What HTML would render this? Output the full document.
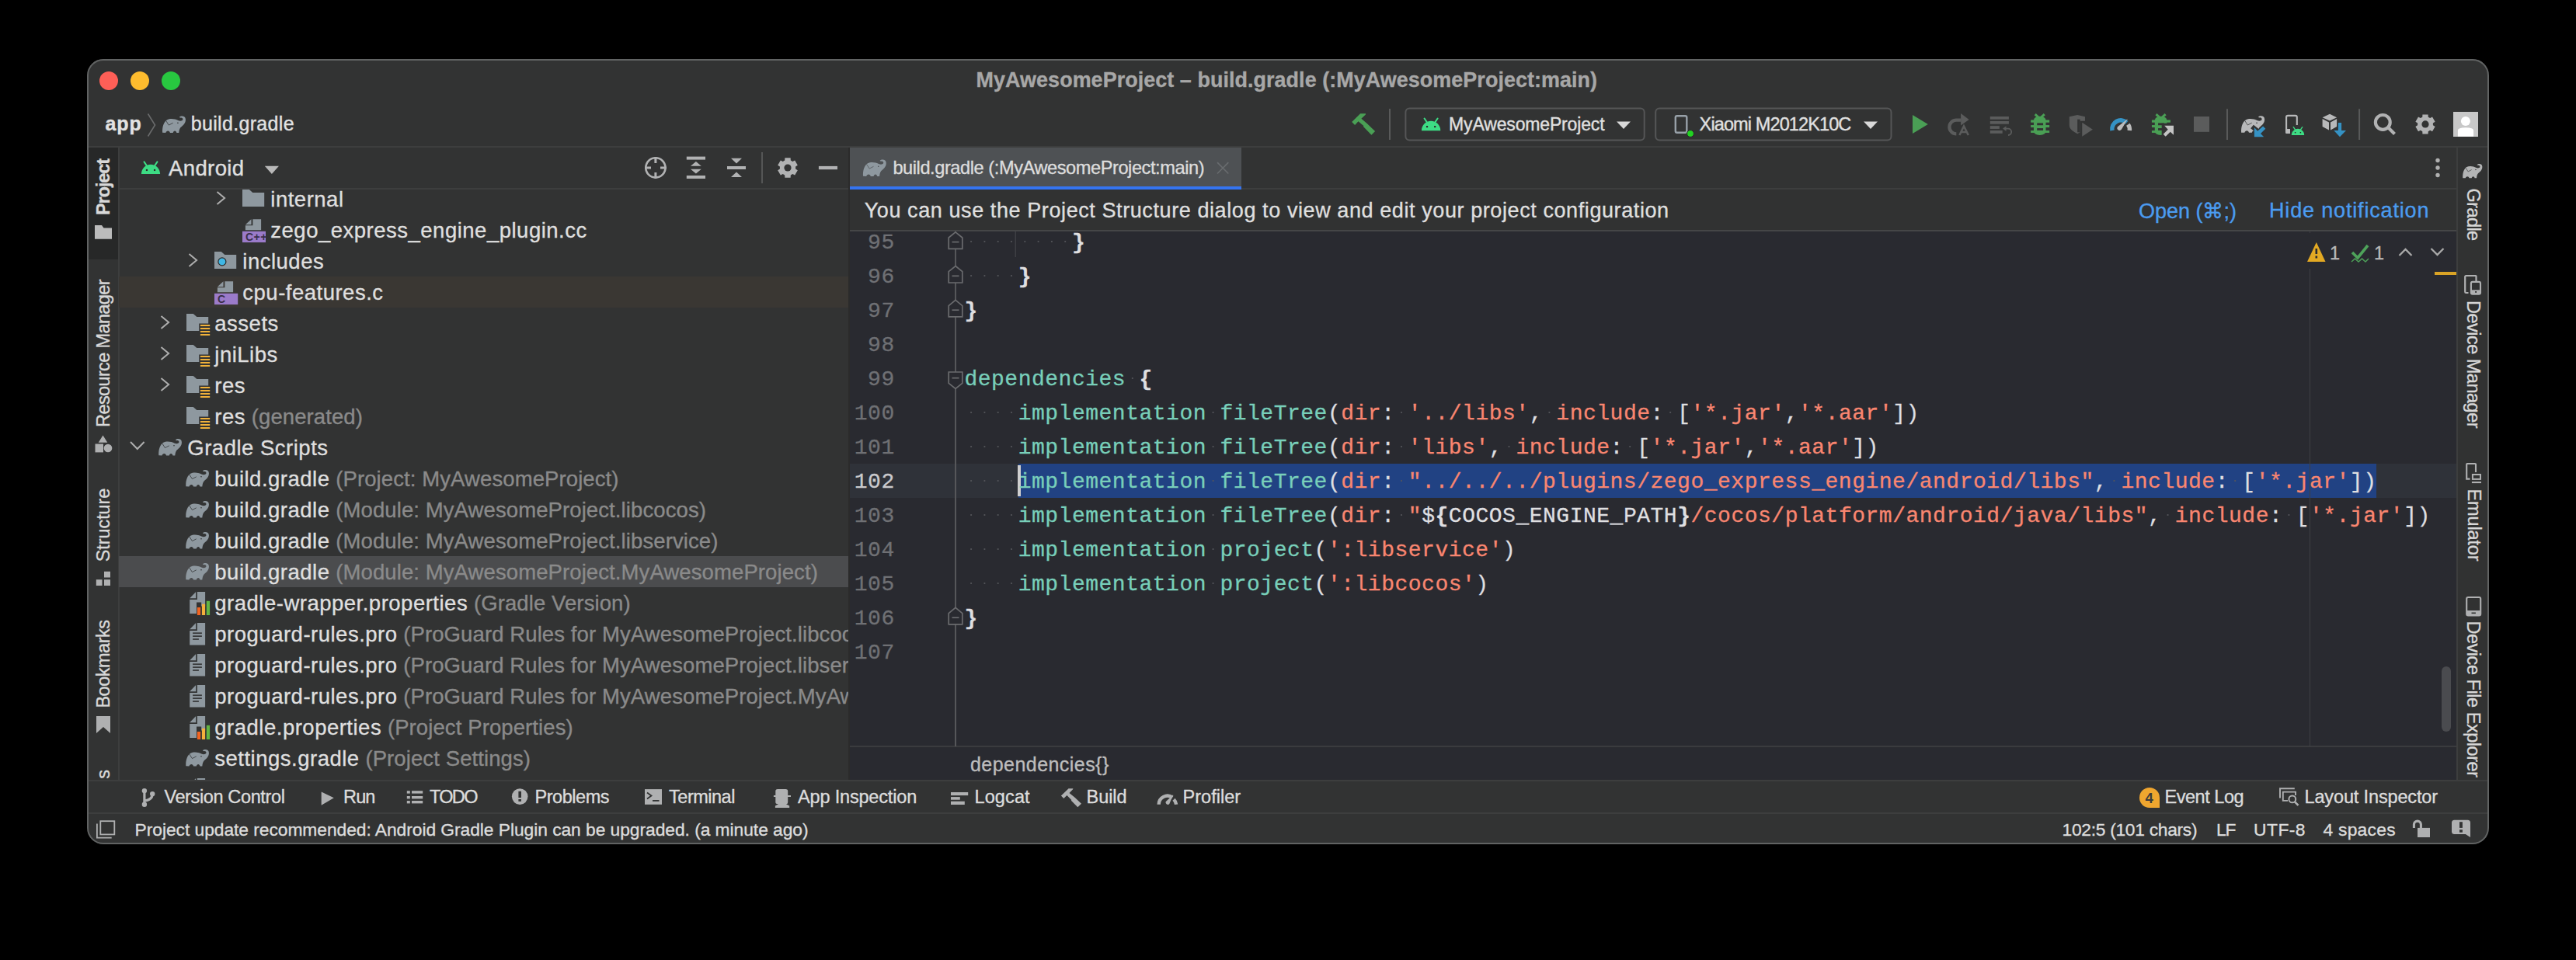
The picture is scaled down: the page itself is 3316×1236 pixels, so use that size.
<!DOCTYPE html>
<html><head><meta charset="utf-8"><style>
html,body{margin:0;padding:0;background:#000;width:3316px;height:1236px;overflow:hidden}
#win div,#win svg{position:absolute}
.t{font-family:"Liberation Sans",sans-serif;white-space:pre;line-height:normal;-webkit-text-stroke:0.35px currentColor}
.m{font-family:"Liberation Mono",monospace;white-space:pre;line-height:normal;-webkit-text-stroke:0.3px currentColor}
</style></head><body>
<div id="win" style="position:absolute;left:0;top:0;width:3316px;height:1236px;clip-path:inset(76px 113px 149px 113px round 20px)">
<div style="left:113px;top:76px;width:3090px;height:1011px;background:#323333;"></div><div style="left:113px;top:188px;width:3090px;height:2px;background:#3d3e3e;"></div><div style="left:113px;top:190px;width:39px;height:815px;background:#323333;"></div><div style="left:113px;top:190px;width:39px;height:144px;background:#272828;"></div><div style="left:152px;top:190px;width:1.5px;height:815px;background:#3d3e3e;"></div><div style="left:153px;top:242px;width:939px;height:2px;background:#3d3e3e;"></div><div style="left:1092px;top:190px;width:2px;height:815px;background:#2b2b2b;"></div><div style="left:1094px;top:242px;width:2068px;height:2px;background:#3d3e3e;"></div><div style="left:1094px;top:190px;width:504px;height:50px;background:#4e5154;"></div><div style="left:1094px;top:240px;width:504px;height:4px;background:#3574f0;"></div><div style="left:1094px;top:244px;width:2068px;height:52px;background:#313232;"></div><div style="left:1094px;top:296px;width:2068px;height:2px;background:#454647;"></div><div style="left:1094px;top:298px;width:2068px;height:663px;background:#292a30;"></div><div style="left:1094px;top:960px;width:2068px;height:2px;background:#3a3b3e;"></div><div style="left:1094px;top:962px;width:2068px;height:43px;background:#292a30;"></div><div style="left:3162px;top:190px;width:2px;height:815px;background:#3d3e3e;"></div><div style="left:3164px;top:190px;width:39px;height:815px;background:#313232;"></div><div style="left:113px;top:1004px;width:3090px;height:2px;background:#3d3e3e;"></div><div style="left:113px;top:1046px;width:3090px;height:2px;background:#3d3e3e;"></div><div class="t" style="left:1256.60px;top:87.80px;font-size:26.9px;color:#a7a7a7;font-weight:700;letter-spacing:0.072px;">MyAwesomeProject – build.gradle (:MyAwesomeProject:main)</div><div class="t" style="left:135.50px;top:145.10px;font-size:25px;color:#e2e2e2;font-weight:700;letter-spacing:0.898px;">app</div><div class="t" style="left:245.70px;top:145.10px;font-size:25px;color:#e2e2e2;font-weight:400;letter-spacing:0.335px;">build.gradle</div><div class="t" style="left:1865.10px;top:147.00px;font-size:23px;color:#e0e0e0;font-weight:400;letter-spacing:-0.156px;">MyAwesomeProject</div><div class="t" style="left:2187.60px;top:147.00px;font-size:23.5px;color:#e0e0e0;font-weight:400;letter-spacing:-0.886px;">Xiaomi M2012K10C</div><div class="t" style="left:217.00px;top:201.00px;font-size:27.5px;color:#e0e0e0;font-weight:400;letter-spacing:0.396px;">Android</div><div class="t" style="left:1149.40px;top:203.10px;font-size:23.6px;color:#dcdcdc;font-weight:400;letter-spacing:-0.429px;">build.gradle (:MyAwesomeProject:main)</div><div class="t" style="left:1112.70px;top:256.00px;font-size:27px;color:#dfdfdf;font-weight:400;letter-spacing:0.588px;">You can use the Project Structure dialog to view and edit your project configuration</div><div class="t" style="left:2753.00px;top:256.00px;font-size:27px;color:#4b9cf0;font-weight:400;letter-spacing:-0.015px;">Open (⌘;)</div><div class="t" style="left:2921.00px;top:256.00px;font-size:27px;color:#4b9cf0;font-weight:400;letter-spacing:0.832px;">Hide notification</div><div style="left:0;top:0;width:3316px;height:1236px;clip-path:inset(244px 2224px 232px 153px)"><div class="t" style="left:348.3px;top:241.1px;font-size:27.5px;letter-spacing:0.5px;color:#dfdfdf">internal<span style="color:#8a8a8a;letter-spacing:0.10000000000000003px"></span></div><div class="t" style="left:348.3px;top:281.1px;font-size:27.5px;letter-spacing:0.5px;color:#dfdfdf">zego_express_engine_plugin.cc<span style="color:#8a8a8a;letter-spacing:0.10000000000000003px"></span></div><div class="t" style="left:312.3px;top:321.1px;font-size:27.5px;letter-spacing:0.5px;color:#dfdfdf">includes<span style="color:#8a8a8a;letter-spacing:0.10000000000000003px"></span></div><div style="left:153px;top:355.5px;width:939px;height:40px;background:#3a3733;"></div><div class="t" style="left:312.3px;top:361.1px;font-size:27.5px;letter-spacing:0.5px;color:#dfdfdf">cpu-features.c<span style="color:#8a8a8a;letter-spacing:0.10000000000000003px"></span></div><div class="t" style="left:276.3px;top:401.1px;font-size:27.5px;letter-spacing:0.5px;color:#dfdfdf">assets<span style="color:#8a8a8a;letter-spacing:0.10000000000000003px"></span></div><div class="t" style="left:276.3px;top:441.1px;font-size:27.5px;letter-spacing:0.5px;color:#dfdfdf">jniLibs<span style="color:#8a8a8a;letter-spacing:0.10000000000000003px"></span></div><div class="t" style="left:276.3px;top:481.1px;font-size:27.5px;letter-spacing:0.5px;color:#dfdfdf">res<span style="color:#8a8a8a;letter-spacing:0.10000000000000003px"></span></div><div class="t" style="left:276.3px;top:521.1px;font-size:27.5px;letter-spacing:0.5px;color:#dfdfdf">res<span style="color:#8a8a8a;letter-spacing:0.10000000000000003px"> (generated)</span></div><div class="t" style="left:241.3px;top:561.1px;font-size:27.5px;letter-spacing:0.5px;color:#dfdfdf">Gradle Scripts<span style="color:#8a8a8a;letter-spacing:0.10000000000000003px"></span></div><div class="t" style="left:276.3px;top:601.1px;font-size:27.5px;letter-spacing:0.5px;color:#dfdfdf">build.gradle<span style="color:#8a8a8a;letter-spacing:0.10000000000000003px"> (Project: MyAwesomeProject)</span></div><div class="t" style="left:276.3px;top:641.1px;font-size:27.5px;letter-spacing:0.5px;color:#dfdfdf">build.gradle<span style="color:#8a8a8a;letter-spacing:0.10000000000000003px"> (Module: MyAwesomeProject.libcocos)</span></div><div class="t" style="left:276.3px;top:681.1px;font-size:27.5px;letter-spacing:0.5px;color:#dfdfdf">build.gradle<span style="color:#8a8a8a;letter-spacing:0.10000000000000003px"> (Module: MyAwesomeProject.libservice)</span></div><div style="left:153px;top:715.5px;width:939px;height:40px;background:#4b4c4e;"></div><div class="t" style="left:276.3px;top:721.1px;font-size:27.5px;letter-spacing:0.5px;color:#dfdfdf">build.gradle<span style="color:#8a8a8a;letter-spacing:0.10000000000000003px"> (Module: MyAwesomeProject.MyAwesomeProject)</span></div><div class="t" style="left:276.3px;top:761.1px;font-size:27.5px;letter-spacing:0.5px;color:#dfdfdf">gradle-wrapper.properties<span style="color:#8a8a8a;letter-spacing:0.10000000000000003px"> (Gradle Version)</span></div><div class="t" style="left:276.3px;top:801.1px;font-size:27.5px;letter-spacing:0.5px;color:#dfdfdf">proguard-rules.pro<span style="color:#8a8a8a;letter-spacing:0.10000000000000003px"> (ProGuard Rules for MyAwesomeProject.libcocos)</span></div><div class="t" style="left:276.3px;top:841.1px;font-size:27.5px;letter-spacing:0.5px;color:#dfdfdf">proguard-rules.pro<span style="color:#8a8a8a;letter-spacing:0.10000000000000003px"> (ProGuard Rules for MyAwesomeProject.libservice)</span></div><div class="t" style="left:276.3px;top:881.1px;font-size:27.5px;letter-spacing:0.5px;color:#dfdfdf">proguard-rules.pro<span style="color:#8a8a8a;letter-spacing:0.10000000000000003px"> (ProGuard Rules for MyAwesomeProject.MyAwesomeProject)</span></div><div class="t" style="left:276.3px;top:921.1px;font-size:27.5px;letter-spacing:0.5px;color:#dfdfdf">gradle.properties<span style="color:#8a8a8a;letter-spacing:0.10000000000000003px"> (Project Properties)</span></div><div class="t" style="left:276.3px;top:961.1px;font-size:27.5px;letter-spacing:0.5px;color:#dfdfdf">settings.gradle<span style="color:#8a8a8a;letter-spacing:0.10000000000000003px"> (Project Settings)</span></div><div class="t" style="left:276.3px;top:1001.1px;font-size:27.5px;letter-spacing:0.5px;color:#dfdfdf">local.properties<span style="color:#8a8a8a;letter-spacing:0.10000000000000003px"> (SDK Location)</span></div></div><div style="left:1094px;top:597px;width:2068px;height:44px;background:#2f3239;"></div><div style="left:1310.6px;top:597px;width:1748.1px;height:44px;background:#214283;"></div><div style="left:1309.5px;top:599px;width:4px;height:40px;background:#cfcfcf;"></div><div style="left:2972.5px;top:298px;width:1.5px;height:663px;background:#3e3f44;"></div><div style="left:1229px;top:298px;width:2px;height:663px;background:#56575a;"></div><div class="m" style="left:1117.08px;top:297.30px;font-size:28px;letter-spacing:0.51px;color:#6f7074">95</div><div class="m" style="left:1241.40px;top:297.30px;font-size:28px;letter-spacing:0.51px">        <span style="color:#dfdfe0;font-weight:700">}</span></div><div class="m" style="left:1117.08px;top:341.30px;font-size:28px;letter-spacing:0.51px;color:#6f7074">96</div><div class="m" style="left:1241.40px;top:341.30px;font-size:28px;letter-spacing:0.51px">    <span style="color:#dfdfe0;font-weight:700">}</span></div><div class="m" style="left:1117.08px;top:385.30px;font-size:28px;letter-spacing:0.51px;color:#6f7074">97</div><div class="m" style="left:1241.40px;top:385.30px;font-size:28px;letter-spacing:0.51px"><span style="color:#dfdfe0;font-weight:700">}</span></div><div class="m" style="left:1117.08px;top:429.30px;font-size:28px;letter-spacing:0.51px;color:#6f7074">98</div><div class="m" style="left:1117.08px;top:473.30px;font-size:28px;letter-spacing:0.51px;color:#6f7074">99</div><div class="m" style="left:1241.40px;top:473.30px;font-size:28px;letter-spacing:0.51px"><span style="color:#78cfba">dependencies</span> <span style="color:#dfdfe0;font-weight:700">{</span></div><div class="m" style="left:1099.77px;top:517.30px;font-size:28px;letter-spacing:0.51px;color:#6f7074">100</div><div class="m" style="left:1241.40px;top:517.30px;font-size:28px;letter-spacing:0.51px">    <span style="color:#78cfba">implementation</span> <span style="color:#78cfba">fileTree</span><span style="color:#dfdfe0">(</span><span style="color:#f98670">dir</span><span style="color:#dfdfe0">:</span> <span style="color:#f98670">&#x27;../libs&#x27;</span><span style="color:#dfdfe0">,</span> <span style="color:#f98670">include</span><span style="color:#dfdfe0">:</span> <span style="color:#dfdfe0">[</span><span style="color:#f98670">&#x27;*.jar&#x27;</span><span style="color:#dfdfe0">,</span><span style="color:#f98670">&#x27;*.aar&#x27;</span><span style="color:#dfdfe0">])</span></div><div class="m" style="left:1099.77px;top:561.30px;font-size:28px;letter-spacing:0.51px;color:#6f7074">101</div><div class="m" style="left:1241.40px;top:561.30px;font-size:28px;letter-spacing:0.51px">    <span style="color:#78cfba">implementation</span> <span style="color:#78cfba">fileTree</span><span style="color:#dfdfe0">(</span><span style="color:#f98670">dir</span><span style="color:#dfdfe0">:</span> <span style="color:#f98670">&#x27;libs&#x27;</span><span style="color:#dfdfe0">,</span> <span style="color:#f98670">include</span><span style="color:#dfdfe0">:</span> <span style="color:#dfdfe0">[</span><span style="color:#f98670">&#x27;*.jar&#x27;</span><span style="color:#dfdfe0">,</span><span style="color:#f98670">&#x27;*.aar&#x27;</span><span style="color:#dfdfe0">])</span></div><div class="m" style="left:1099.77px;top:605.30px;font-size:28px;letter-spacing:0.51px;color:#c9c9cc">102</div><div class="m" style="left:1241.40px;top:605.30px;font-size:28px;letter-spacing:0.51px">    <span style="color:#78cfba">implementation</span> <span style="color:#78cfba">fileTree</span><span style="color:#dfdfe0">(</span><span style="color:#f98670">dir</span><span style="color:#dfdfe0">:</span> <span style="color:#f98670">&quot;../../../plugins/zego_express_engine/android/libs&quot;</span><span style="color:#dfdfe0">,</span> <span style="color:#f98670">include</span><span style="color:#dfdfe0">:</span> <span style="color:#dfdfe0">[</span><span style="color:#f98670">&#x27;*.jar&#x27;</span><span style="color:#dfdfe0">])</span></div><div class="m" style="left:1099.77px;top:649.30px;font-size:28px;letter-spacing:0.51px;color:#6f7074">103</div><div class="m" style="left:1241.40px;top:649.30px;font-size:28px;letter-spacing:0.51px">    <span style="color:#78cfba">implementation</span> <span style="color:#78cfba">fileTree</span><span style="color:#dfdfe0">(</span><span style="color:#f98670">dir</span><span style="color:#dfdfe0">:</span> <span style="color:#f98670">&quot;</span><span style="color:#dfdfe0">$</span><span style="color:#dfdfe0;font-weight:700">{</span><span style="color:#dfdfe0">COCOS_ENGINE_PATH</span><span style="color:#dfdfe0;font-weight:700">}</span><span style="color:#f98670">/cocos/platform/android/java/libs&quot;</span><span style="color:#dfdfe0">,</span> <span style="color:#f98670">include</span><span style="color:#dfdfe0">:</span> <span style="color:#dfdfe0">[</span><span style="color:#f98670">&#x27;*.jar&#x27;</span><span style="color:#dfdfe0">])</span></div><div class="m" style="left:1099.77px;top:693.30px;font-size:28px;letter-spacing:0.51px;color:#6f7074">104</div><div class="m" style="left:1241.40px;top:693.30px;font-size:28px;letter-spacing:0.51px">    <span style="color:#78cfba">implementation</span> <span style="color:#78cfba">project</span><span style="color:#dfdfe0">(</span><span style="color:#f98670">&#x27;:libservice&#x27;</span><span style="color:#dfdfe0">)</span></div><div class="m" style="left:1099.77px;top:737.30px;font-size:28px;letter-spacing:0.51px;color:#6f7074">105</div><div class="m" style="left:1241.40px;top:737.30px;font-size:28px;letter-spacing:0.51px">    <span style="color:#78cfba">implementation</span> <span style="color:#78cfba">project</span><span style="color:#dfdfe0">(</span><span style="color:#f98670">&#x27;:libcocos&#x27;</span><span style="color:#dfdfe0">)</span></div><div class="m" style="left:1099.77px;top:781.30px;font-size:28px;letter-spacing:0.51px;color:#6f7074">106</div><div class="m" style="left:1241.40px;top:781.30px;font-size:28px;letter-spacing:0.51px"><span style="color:#dfdfe0;font-weight:700">}</span></div><div class="m" style="left:1099.77px;top:825.30px;font-size:28px;letter-spacing:0.51px;color:#6f7074">107</div><div style="left:2960px;top:300px;width:30px;height:46px;background:#292a30;"></div><div class="t" style="left:2999.00px;top:312.50px;font-size:23.5px;color:#b9b9b9;font-weight:400;letter-spacing:0px;">1</div><div class="t" style="left:3056.00px;top:312.50px;font-size:23.5px;color:#b9b9b9;font-weight:400;letter-spacing:0px;">1</div><div class="t" style="left:1249.00px;top:970.00px;font-size:25px;color:#bdbdbd;font-weight:400;letter-spacing:0.451px;">dependencies{}</div><div class="t" style="left:211.40px;top:1013.20px;font-size:23.5px;color:#dcdcdc;font-weight:400;letter-spacing:-0.368px;">Version Control</div><div class="t" style="left:442.10px;top:1013.20px;font-size:23.5px;color:#dcdcdc;font-weight:400;letter-spacing:-0.905px;">Run</div><div class="t" style="left:553.00px;top:1013.20px;font-size:23.5px;color:#dcdcdc;font-weight:400;letter-spacing:-1.685px;">TODO</div><div class="t" style="left:688.50px;top:1013.20px;font-size:23.5px;color:#dcdcdc;font-weight:400;letter-spacing:-0.45px;">Problems</div><div class="t" style="left:861.10px;top:1013.20px;font-size:23.5px;color:#dcdcdc;font-weight:400;letter-spacing:-0.5px;">Terminal</div><div class="t" style="left:1027.00px;top:1013.20px;font-size:23.5px;color:#dcdcdc;font-weight:400;letter-spacing:-0.175px;">App Inspection</div><div class="t" style="left:1254.50px;top:1013.20px;font-size:23.5px;color:#dcdcdc;font-weight:400;letter-spacing:0.11px;">Logcat</div><div class="t" style="left:1398.50px;top:1013.20px;font-size:23.5px;color:#dcdcdc;font-weight:400;letter-spacing:-0.038px;">Build</div><div class="t" style="left:1522.50px;top:1013.20px;font-size:23.5px;color:#dcdcdc;font-weight:400;letter-spacing:0.025px;">Profiler</div><div class="t" style="left:2786.50px;top:1013.20px;font-size:23.5px;color:#dcdcdc;font-weight:400;letter-spacing:-0.466px;">Event Log</div><div class="t" style="left:2966.50px;top:1013.20px;font-size:23.5px;color:#dcdcdc;font-weight:400;letter-spacing:-0.142px;">Layout Inspector</div><div class="t" style="left:173.60px;top:1054.70px;font-size:22.8px;color:#dcdcdc;font-weight:400;letter-spacing:-0.046px;">Project update recommended: Android Gradle Plugin can be upgraded. (a minute ago)</div><div class="t" style="left:2654.50px;top:1054.70px;font-size:22.8px;color:#dcdcdc;font-weight:400;letter-spacing:-0.29px;">102:5 (101 chars)</div><div class="t" style="left:2853.10px;top:1054.70px;font-size:22.8px;color:#dcdcdc;font-weight:400;letter-spacing:-1.157px;">LF</div><div class="t" style="left:2901.10px;top:1054.70px;font-size:22.8px;color:#dcdcdc;font-weight:400;letter-spacing:0.465px;">UTF-8</div><div class="t" style="left:2990.50px;top:1054.70px;font-size:22.8px;color:#dcdcdc;font-weight:400;letter-spacing:0.257px;">4 spaces</div><div class="t" style="left:95.6px;top:227.2px;width:74.9px;height:28px;line-height:28px;text-align:center;font-size:23.5px;letter-spacing:-1.109px;color:#d8d8d8;font-weight:700;transform:rotate(-90deg)">Project</div><div class="t" style="left:36.8px;top:440.5px;width:192.3px;height:28px;line-height:28px;text-align:center;font-size:23.5px;letter-spacing:-0.63px;color:#d8d8d8;font-weight:400;transform:rotate(-90deg)">Resource Manager</div><div class="t" style="left:84.8px;top:662.2px;width:96.5px;height:28px;line-height:28px;text-align:center;font-size:23.5px;letter-spacing:-0.091px;color:#d8d8d8;font-weight:400;transform:rotate(-90deg)">Structure</div><div class="t" style="left:75.2px;top:840.8px;width:115.5px;height:28px;line-height:28px;text-align:center;font-size:23.5px;letter-spacing:-0.491px;color:#d8d8d8;font-weight:400;transform:rotate(-90deg)">Bookmarks</div><div style="left:0;top:0;width:3316px;height:1236px;clip-path:inset(960px 3160px 233px 113px)"><div class="t" style="left:50.2px;top:1058.2px;width:165.5px;height:28px;line-height:28px;text-align:center;font-size:23.5px;letter-spacing:1.567px;color:#d8d8d8;font-weight:400;transform:rotate(-90deg)">Build Variants</div></div><div class="t" style="left:3149.2px;top:261.7px;width:69.6px;height:28px;line-height:28px;text-align:center;font-size:23.5px;letter-spacing:-0.566px;color:#d8d8d8;transform:rotate(90deg)">Gradle</div><div class="t" style="left:3100.8px;top:455.1px;width:166.5px;height:28px;line-height:28px;text-align:center;font-size:23.5px;letter-spacing:-0.5px;color:#d8d8d8;transform:rotate(90deg)">Device Manager</div><div class="t" style="left:3136.5px;top:661.5px;width:95.0px;height:28px;line-height:28px;text-align:center;font-size:23.5px;letter-spacing:-0.133px;color:#d8d8d8;transform:rotate(90deg)">Emulator</div><div class="t" style="left:3082.2px;top:886.2px;width:203.5px;height:28px;line-height:28px;text-align:center;font-size:23.5px;letter-spacing:-0.455px;color:#d8d8d8;transform:rotate(90deg)">Device File Explorer</div><div style="left:0;top:0;width:3316px;height:1236px;"><svg style="left:0;top:0" width="3316" height="1236" viewBox="0 0 3316 1236"><circle cx="140" cy="104" r="12" fill="#ff5f57"/><circle cx="180" cy="104" r="12" fill="#febc2e"/><circle cx="220" cy="104" r="12" fill="#28c840"/><path d="M190.5,146.5 L199.5,161 L190.5,175.5" fill="none" stroke="#6a6b6c" stroke-width="1.6"/><g transform="translate(208.8,149) scale(0.03146,0.03099) translate(-130,-120)"><path fill="#8e989f" d="M140 825 C125 600 185 385 330 290 C450 225 650 240 800 325 C870 355 950 340 975 285 C990 225 930 180 870 205 L830 180 C900 105 1085 115 1088 270 C1092 420 1000 505 885 600 C845 640 822 720 812 828 L720 828 C705 720 590 720 572 828 L452 828 C432 720 300 720 272 828 Z"/><circle cx="770" cy="420" r="26" fill="#2f3031"/><path d="M285 330 L400 510 L570 420" fill="none" stroke="#2f3031" stroke-width="24"/></g></svg></div><div style="left:0;top:0;width:3316px;height:1236px;clip-path:inset(244px 2224px 232px 153px)"><svg style="left:0;top:0" width="3316" height="1236" viewBox="0 0 3316 1236"><path d="M279.5,247.1 L289.1,255.0 L279.5,262.9" fill="none" stroke="#aeaeae" stroke-width="2"/><path fill="#8e989f" d="M312,244.0 H320.8 L325.3,248.0 H340.2 V266.0 H312 Z"/><path fill="#8e989f" d="M315.9,289.3 L323.5,282.2 V289.3 Z"/><path fill="#8e989f" d="M325.4,282.2 H336.1 V296.3 H315.9 V290.3 H325.4 Z"/><rect x="312" y="297.8" width="30" height="14.3" fill="#9b7bca"/><text x="316" y="309.8" font-family="Liberation Sans" font-size="14" font-weight="700" fill="#3a2f4a" letter-spacing="0.5">C++</text><path d="M243.5,327.1 L253.1,335.0 L243.5,342.90000000000003" fill="none" stroke="#aeaeae" stroke-width="2"/><path fill="#8e989f" d="M276,324.0 H284.8 L289.3,328.0 H304.2 V346.0 H276 Z"/><circle cx="285.9" cy="336.9" r="5" fill="#3fb7e5" stroke="#2a2b2b" stroke-width="1.2"/><path fill="#8e989f" d="M279.9,369.3 L287.5,362.2 V369.3 Z"/><path fill="#8e989f" d="M289.4,362.2 H300.1 V376.3 H279.9 V370.3 H289.4 Z"/><rect x="276" y="377.8" width="30.2" height="14.3" fill="#9b7bca"/><text x="280" y="389.8" font-family="Liberation Sans" font-size="14" font-weight="700" fill="#3a2f4a" letter-spacing="0.5">C</text><path d="M207.5,407.1 L217.1,415.0 L207.5,422.90000000000003" fill="none" stroke="#aeaeae" stroke-width="2"/><path fill="#8e989f" d="M240,404.0 H248.8 L253.3,408.0 H268.2 V416.5 H256.25 V426.0 H240 Z"/><rect x="257.9" y="418.0" width="12.3" height="2" fill="#f0b13a"/><rect x="257.9" y="422.0" width="12.3" height="2" fill="#f0b13a"/><rect x="257.9" y="426.0" width="12.3" height="2" fill="#f0b13a"/><rect x="257.9" y="430.0" width="12.3" height="2" fill="#f0b13a"/><path d="M207.5,447.1 L217.1,455.0 L207.5,462.90000000000003" fill="none" stroke="#aeaeae" stroke-width="2"/><path fill="#8e989f" d="M240,444.0 H248.8 L253.3,448.0 H268.2 V456.5 H256.25 V466.0 H240 Z"/><rect x="257.9" y="458.0" width="12.3" height="2" fill="#f0b13a"/><rect x="257.9" y="462.0" width="12.3" height="2" fill="#f0b13a"/><rect x="257.9" y="466.0" width="12.3" height="2" fill="#f0b13a"/><rect x="257.9" y="470.0" width="12.3" height="2" fill="#f0b13a"/><path d="M207.5,487.1 L217.1,495.0 L207.5,502.90000000000003" fill="none" stroke="#aeaeae" stroke-width="2"/><path fill="#8e989f" d="M240,484.0 H248.8 L253.3,488.0 H268.2 V496.5 H256.25 V506.0 H240 Z"/><rect x="257.9" y="498.0" width="12.3" height="2" fill="#f0b13a"/><rect x="257.9" y="502.0" width="12.3" height="2" fill="#f0b13a"/><rect x="257.9" y="506.0" width="12.3" height="2" fill="#f0b13a"/><rect x="257.9" y="510.0" width="12.3" height="2" fill="#f0b13a"/><path fill="#8e989f" d="M240,524.0 H248.8 L253.3,528.0 H268.2 V536.5 H256.25 V546.0 H240 Z"/><rect x="257.9" y="538.0" width="12.3" height="2" fill="#f0b13a"/><rect x="257.9" y="542.0" width="12.3" height="2" fill="#f0b13a"/><rect x="257.9" y="546.0" width="12.3" height="2" fill="#f0b13a"/><rect x="257.9" y="550.0" width="12.3" height="2" fill="#f0b13a"/><path d="M168,569.0 L176.8,578.0 L185.6,569.0" fill="none" stroke="#aeaeae" stroke-width="2"/><g transform="translate(204,564.5) scale(0.03125,0.03099) translate(-130,-120)"><path fill="#8e989f" d="M140 825 C125 600 185 385 330 290 C450 225 650 240 800 325 C870 355 950 340 975 285 C990 225 930 180 870 205 L830 180 C900 105 1085 115 1088 270 C1092 420 1000 505 885 600 C845 640 822 720 812 828 L720 828 C705 720 590 720 572 828 L452 828 C432 720 300 720 272 828 Z"/><circle cx="770" cy="420" r="26" fill="#2f3031"/><path d="M285 330 L400 510 L570 420" fill="none" stroke="#2f3031" stroke-width="24"/></g><g transform="translate(239,604.5) scale(0.03125,0.03099) translate(-130,-120)"><path fill="#8e989f" d="M140 825 C125 600 185 385 330 290 C450 225 650 240 800 325 C870 355 950 340 975 285 C990 225 930 180 870 205 L830 180 C900 105 1085 115 1088 270 C1092 420 1000 505 885 600 C845 640 822 720 812 828 L720 828 C705 720 590 720 572 828 L452 828 C432 720 300 720 272 828 Z"/><circle cx="770" cy="420" r="26" fill="#2f3031"/><path d="M285 330 L400 510 L570 420" fill="none" stroke="#2f3031" stroke-width="24"/></g><g transform="translate(239,644.5) scale(0.03125,0.03099) translate(-130,-120)"><path fill="#8e989f" d="M140 825 C125 600 185 385 330 290 C450 225 650 240 800 325 C870 355 950 340 975 285 C990 225 930 180 870 205 L830 180 C900 105 1085 115 1088 270 C1092 420 1000 505 885 600 C845 640 822 720 812 828 L720 828 C705 720 590 720 572 828 L452 828 C432 720 300 720 272 828 Z"/><circle cx="770" cy="420" r="26" fill="#2f3031"/><path d="M285 330 L400 510 L570 420" fill="none" stroke="#2f3031" stroke-width="24"/></g><g transform="translate(239,684.5) scale(0.03125,0.03099) translate(-130,-120)"><path fill="#8e989f" d="M140 825 C125 600 185 385 330 290 C450 225 650 240 800 325 C870 355 950 340 975 285 C990 225 930 180 870 205 L830 180 C900 105 1085 115 1088 270 C1092 420 1000 505 885 600 C845 640 822 720 812 828 L720 828 C705 720 590 720 572 828 L452 828 C432 720 300 720 272 828 Z"/><circle cx="770" cy="420" r="26" fill="#2f3031"/><path d="M285 330 L400 510 L570 420" fill="none" stroke="#2f3031" stroke-width="24"/></g><g transform="translate(239,724.5) scale(0.03125,0.03099) translate(-130,-120)"><path fill="#8e989f" d="M140 825 C125 600 185 385 330 290 C450 225 650 240 800 325 C870 355 950 340 975 285 C990 225 930 180 870 205 L830 180 C900 105 1085 115 1088 270 C1092 420 1000 505 885 600 C845 640 822 720 812 828 L720 828 C705 720 590 720 572 828 L452 828 C432 720 300 720 272 828 Z"/><circle cx="770" cy="420" r="26" fill="#2f3031"/><path d="M285 330 L400 510 L570 420" fill="none" stroke="#2f3031" stroke-width="24"/></g><path fill="#8e989f" d="M244.2,770.3 L252.2,762.1 V770.3 Z"/><path fill="#8e989f" d="M253.89999999999998,762.1 H264.09999999999997 V780.5 H259.2 V775.5 H253.0 V790.0 H244.2 V772.0 H253.89999999999998 Z"/><rect x="253.89999999999998" y="782.0" width="4.2" height="10" fill="#f26522"/><rect x="259.9" y="777.8" width="4.2" height="14.2" fill="#f4b03c"/><rect x="265.8" y="773.8" width="4.3" height="18.2" fill="#62b543"/><path fill="#8e989f" d="M244.2,810.3 L252.2,802.1 V810.3 Z"/><path fill="#8e989f" d="M253.89999999999998,802.1 H264.09999999999997 V830.5 H244.2 V812.0 H253.89999999999998 Z"/><rect x="248.1" y="814.3" width="11.8" height="1.8" fill="#3a3b3c"/><rect x="248.1" y="818.1999999999999" width="11.8" height="1.8" fill="#3a3b3c"/><rect x="248.1" y="822.0999999999999" width="7.8" height="1.8" fill="#3a3b3c"/><path fill="#8e989f" d="M244.2,850.3 L252.2,842.1 V850.3 Z"/><path fill="#8e989f" d="M253.89999999999998,842.1 H264.09999999999997 V870.5 H244.2 V852.0 H253.89999999999998 Z"/><rect x="248.1" y="854.3" width="11.8" height="1.8" fill="#3a3b3c"/><rect x="248.1" y="858.1999999999999" width="11.8" height="1.8" fill="#3a3b3c"/><rect x="248.1" y="862.0999999999999" width="7.8" height="1.8" fill="#3a3b3c"/><path fill="#8e989f" d="M244.2,890.3 L252.2,882.1 V890.3 Z"/><path fill="#8e989f" d="M253.89999999999998,882.1 H264.09999999999997 V910.5 H244.2 V892.0 H253.89999999999998 Z"/><rect x="248.1" y="894.3" width="11.8" height="1.8" fill="#3a3b3c"/><rect x="248.1" y="898.1999999999999" width="11.8" height="1.8" fill="#3a3b3c"/><rect x="248.1" y="902.0999999999999" width="7.8" height="1.8" fill="#3a3b3c"/><path fill="#8e989f" d="M244.2,930.3 L252.2,922.1 V930.3 Z"/><path fill="#8e989f" d="M253.89999999999998,922.1 H264.09999999999997 V940.5 H259.2 V935.5 H253.0 V950.0 H244.2 V932.0 H253.89999999999998 Z"/><rect x="253.89999999999998" y="942.0" width="4.2" height="10" fill="#f26522"/><rect x="259.9" y="937.8" width="4.2" height="14.2" fill="#f4b03c"/><rect x="265.8" y="933.8" width="4.3" height="18.2" fill="#62b543"/><g transform="translate(239,964.5) scale(0.03125,0.03099) translate(-130,-120)"><path fill="#8e989f" d="M140 825 C125 600 185 385 330 290 C450 225 650 240 800 325 C870 355 950 340 975 285 C990 225 930 180 870 205 L830 180 C900 105 1085 115 1088 270 C1092 420 1000 505 885 600 C845 640 822 720 812 828 L720 828 C705 720 590 720 572 828 L452 828 C432 720 300 720 272 828 Z"/><circle cx="770" cy="420" r="26" fill="#2f3031"/><path d="M285 330 L400 510 L570 420" fill="none" stroke="#2f3031" stroke-width="24"/></g><path fill="#8e989f" d="M244.2,1010.3 L252.2,1002.1 V1010.3 Z"/><path fill="#8e989f" d="M253.89999999999998,1002.1 H264.09999999999997 V1020.5 H259.2 V1015.5 H253.0 V1030.0 H244.2 V1012.0 H253.89999999999998 Z"/><rect x="253.89999999999998" y="1022.0" width="4.2" height="10" fill="#f26522"/><rect x="259.9" y="1017.8" width="4.2" height="14.2" fill="#f4b03c"/><rect x="265.8" y="1013.8" width="4.3" height="18.2" fill="#62b543"/></svg></div><div style="left:0;top:0;width:3316px;height:1236px;"><svg style="left:0;top:0" width="3316" height="1236" viewBox="0 0 3316 1236"><path fill="#4a9f55" d="M1740.2,157.1 L1751.1,146.2 L1758.1,146.2 L1757.9,147.5 L1752.4,152.7 L1759.7,158.9 L1770.1,169.1 L1765.4,173.8 L1755,163.1 L1755.3,162 L1748.5,156.3 L1744.1,161 Z"/><rect x="1788" y="140" width="2" height="40" fill="#595a5a"/><rect x="1809.4" y="139.4" width="307.3" height="41.1" rx="5" fill="none" stroke="#555657" stroke-width="2"/><rect x="2131.2" y="139.4" width="303.3" height="41.1" rx="5" fill="none" stroke="#555657" stroke-width="2"/><g transform="translate(1829.9,152) scale(0.07821,0.07714) translate(-153,-165)"><path fill="#3ddc84" d="M153 375 C153 285 225 215 309 215 C393 215 465 285 465 375 Z"/><path d="M200 172 L245 240 M418 172 L373 240" stroke="#3ddc84" stroke-width="26" stroke-linecap="round"/><rect x="230" y="295" width="28" height="28" fill="#2b2b2b"/><rect x="360" y="295" width="28" height="28" fill="#2b2b2b"/></g><path d="M2081,156.5 H2099 L2090.0,166.0 Z" fill="#d9d9d9"/><rect x="2156.8" y="149.2" width="14.5" height="21.5" rx="2" fill="none" stroke="#97a0a8" stroke-width="2.4"/><circle cx="2176" cy="172" r="4.4" fill="#22d322" stroke="#2a2b2b" stroke-width="1"/><path d="M2399,156.5 H2417 L2408.0,166.0 Z" fill="#d9d9d9"/><path fill="#4a9f55" d="M2462,148 L2481.8,160.1 L2462,172.1 Z"/><path d="M2518.3,172.4 A8,8 0 0 1 2518.3,154.6 H2524" fill="none" stroke="#5b5c5c" stroke-width="4.3"/><path fill="#5b5c5c" d="M2524.1,146.1 L2534.6,153.9 L2524.1,161.6 Z"/><path d="M2522.4,174 L2528,162.4 L2533.8,174 M2524.5,170 H2531.5" fill="none" stroke="#5b5c5c" stroke-width="2.6"/><rect x="2561.8" y="150" width="24.1" height="3.7" fill="#5b5c5c"/><rect x="2561.8" y="156" width="24.1" height="3.7" fill="#5b5c5c"/><rect x="2561.8" y="162.2" width="12" height="3.7" fill="#5b5c5c"/><rect x="2561.8" y="168" width="15.9" height="3.8" fill="#5b5c5c"/><path d="M2580,165.6 H2585 A4.2,4.2 0 0 1 2585,174" fill="none" stroke="#5b5c5c" stroke-width="1.8"/><path fill="#5b5c5c" d="M2578.1,165.6 L2582.5,162.2 V169 Z"/><path fill="#4a9f55" d="M 2617.97,154.67 Q 2618.17,149.93 2625.74,149.63 Q 2633.31,149.93 2633.51,154.67 V 168.80 Q 2633.31,173.55 2625.74,173.95 Q 2618.17,173.55 2617.97,168.80 Z"/><rect x="2614.13" y="154.47" width="24.02" height="3.23" fill="#4a9f55"/><rect x="2614.13" y="161.03" width="24.02" height="3.03" fill="#4a9f55"/><rect x="2614.13" y="168.10" width="24.02" height="2.83" fill="#4a9f55"/><path d="M 2619.68,147.10 L 2625.74,152.65 L 2631.79,147.10" fill="none" stroke="#4a9f55" stroke-width="3"/><rect x="2622.20" y="158.41" width="7.87" height="2.83" fill="#323333"/><rect x="2622.20" y="165.07" width="7.87" height="2.83" fill="#323333"/><path fill="#5b5c5c" d="M 2663.79,150.13 L 2674.18,147.91 L 2683.97,150.13 V 155.68 H 2677.71 V 170.32 L 2674.18,172.13 L 2670.65,170.32 Q 2663.79,166.28 2663.79,161.23 Z"/><rect x="2674.18" y="153.66" width="3.53" height="16.65" fill="#323333"/><path fill="#5b5c5c" d="M 2680.24,157.70 L 2693.86,166.78 L 2680.24,175.87 Z"/><path d="M2719,168 A11.2,11.2 0 0 1 2737.6,157.8" fill="none" stroke="#3592c4" stroke-width="5.5"/><path d="M2739.4,160.2 A11.2,11.2 0 0 1 2741.3,168" fill="none" stroke="#bcbcbc" stroke-width="5.5"/><path fill="#bcbcbc" d="M2738.9,153.1 L2731,166.6 A3,3 0 0 1 2726,163.2 Z"/><path fill="#4a9f55" d="M 2773.80,154.67 Q 2774.00,149.93 2781.57,149.63 Q 2789.14,149.93 2789.34,154.67 V 168.80 Q 2789.14,173.55 2781.57,173.95 Q 2774.00,173.55 2773.80,168.80 Z"/><rect x="2769.96" y="154.47" width="24.02" height="3.23" fill="#4a9f55"/><rect x="2769.96" y="161.03" width="24.02" height="3.03" fill="#4a9f55"/><rect x="2769.96" y="168.10" width="24.02" height="2.83" fill="#4a9f55"/><path d="M 2775.51,147.10 L 2781.57,152.65 L 2787.63,147.10" fill="none" stroke="#4a9f55" stroke-width="3"/><rect x="2778.04" y="158.41" width="7.87" height="2.83" fill="#323333"/><rect x="2778.04" y="165.07" width="7.87" height="2.83" fill="#323333"/><path fill="#323333" d="M 2782.68,158.71 H 2801.86 V 178.39 H 2782.68 Z"/><path fill="#c4c4c4" d="M 2786.21,161.74 H 2798.02 V 173.85 L 2793.78,169.81 L 2787.73,175.87 L 2784.70,172.84 L 2790.75,166.78 Z"/><rect x="2824" y="150" width="20" height="19.8" fill="#5b5c5c"/><rect x="2866" y="140.2" width="2" height="39.8" fill="#595a5a"/><g transform="translate(2884.8,148.9) scale(0.03167,0.03099) translate(-130,-120)"><path fill="#b8b9ba" d="M140 825 C125 600 185 385 330 290 C450 225 650 240 800 325 C870 355 950 340 975 285 C990 225 930 180 870 205 L830 180 C900 105 1085 115 1088 270 C1092 420 1000 505 885 600 C845 640 822 720 812 828 L720 828 C705 720 590 720 572 828 L452 828 C432 720 300 720 272 828 Z"/><circle cx="770" cy="420" r="26" fill="#323333"/><path d="M285 330 L400 510 L570 420" fill="none" stroke="#323333" stroke-width="24"/></g><path d="M2899,163 L2918,177.8" stroke="#323333" stroke-width="6"/><path fill="#3592c4" d="M2901.9,164 V176.2 H2914.2 L2910,172 L2916.3,165.7 L2913.1,162.5 L2906.1,168.8 Z"/><rect x="2943.1" y="148.9" width="13.7" height="22.1" rx="2" fill="none" stroke="#b8b9ba" stroke-width="2.1"/><rect x="2942.1" y="166" width="8" height="6" rx="1" fill="#b8b9ba"/><rect x="2948" y="161" width="20" height="15" fill="#323333"/><g transform="translate(2949.8,163.3) scale(0.05256,0.05143) translate(-153,-165)"><path fill="#3ddc84" d="M153 375 C153 285 225 215 309 215 C393 215 465 285 465 375 Z"/><path d="M200 172 L245 240 M418 172 L373 240" stroke="#3ddc84" stroke-width="26" stroke-linecap="round"/><rect x="230" y="295" width="28" height="28" fill="#2b2b2b"/><rect x="360" y="295" width="28" height="28" fill="#2b2b2b"/></g><path fill="#b8b9ba" d="M2999,146.8 L3008.1,151.2 L2999,155.6 L2989.6,151.2 Z M2989.6,153 L2998,157.5 V167.4 L2989.6,162.9 Z M3000,157.5 L3008.1,153 V162.9 L3000,167.4 Z"/><rect x="3009.9" y="158" width="4.2" height="10.5" fill="#3592c4"/><path fill="#3592c4" d="M3004.3,168.1 H3020 L3012,176.2 Z"/><rect x="3036.1" y="140.2" width="2" height="39.8" fill="#595a5a"/><circle cx="3067.3" cy="157.4" r="9.4" fill="none" stroke="#b1b2b3" stroke-width="4.2"/><path d="M3074.5,164.5 L3082.5,172.5" stroke="#b1b2b3" stroke-width="4"/><path fill="#b1b2b3" d="M3118.42,147.40 L3125.58,147.40 L3125.75,150.63 L3128.16,152.02 L3131.03,150.55 L3134.61,156.76 L3131.90,158.51 L3131.90,161.29 L3134.61,163.04 L3131.03,169.25 L3128.16,167.78 L3125.75,169.17 L3125.58,172.40 L3118.42,172.40 L3118.25,169.17 L3115.84,167.78 L3112.97,169.25 L3109.39,163.04 L3112.10,161.29 L3112.10,158.51 L3109.39,156.76 L3112.97,150.55 L3115.84,152.02 L3118.25,150.63 Z"/><circle cx="3122" cy="159.9" r="4.6" fill="#323333"/><rect x="3158" y="144" width="32" height="32" fill="#c8c8c8"/><circle cx="3173.9" cy="155.9" r="6" fill="#fff"/><path fill="#fff" d="M3163.9,175.8 V168 Q3163.9,164.3 3174,164.3 Q3184.1,164.3 3184.1,168 V175.8 Z"/><g transform="translate(181.9,207.8) scale(0.07756,0.07762) translate(-153,-165)"><path fill="#3ddc84" d="M153 375 C153 285 225 215 309 215 C393 215 465 285 465 375 Z"/><path d="M200 172 L245 240 M418 172 L373 240" stroke="#3ddc84" stroke-width="26" stroke-linecap="round"/><rect x="230" y="295" width="28" height="28" fill="#2b2b2b"/><rect x="360" y="295" width="28" height="28" fill="#2b2b2b"/></g><path d="M340.8,213.8 H359.0 L349.90000000000003,224.10000000000002 Z" fill="#b9b9b9"/><circle cx="843.9" cy="215.9" r="12.6" fill="none" stroke="#b1b2b3" stroke-width="2.6"/><path d="M843.9,202 V210 M843.9,222 V230 M830,215.9 H838 M850,215.9 H858" stroke="#b1b2b3" stroke-width="3"/><rect x="883.8" y="201.6" width="24.2" height="4" fill="#b1b2b3"/><rect x="883.8" y="226" width="24.2" height="4" fill="#b1b2b3"/><path fill="#b1b2b3" d="M889,213.8 L895.9,208 L902.8,213.8 Z M889,217.8 L902.8,217.8 L895.9,223.6 Z"/><rect x="936" y="214" width="24" height="4" fill="#b1b2b3"/><path fill="#b1b2b3" d="M941,203.8 H955 L948,210.5 Z M941,228 H955 L948,221.4 Z"/><rect x="980" y="196" width="2" height="40" fill="#555656"/><path fill="#b1b2b3" d="M1010.36,203.31 L1017.64,203.31 L1017.82,206.54 L1020.28,207.96 L1023.17,206.50 L1026.81,212.81 L1024.10,214.58 L1024.10,217.42 L1026.81,219.19 L1023.17,225.50 L1020.28,224.04 L1017.82,225.46 L1017.64,228.69 L1010.36,228.69 L1010.18,225.46 L1007.72,224.04 L1004.83,225.50 L1001.19,219.19 L1003.90,217.42 L1003.90,214.58 L1001.19,212.81 L1004.83,206.50 L1007.72,207.96 L1010.18,206.54 Z"/><circle cx="1014" cy="216" r="4.6" fill="#323333"/><rect x="1053.9" y="213.9" width="24.1" height="4.3" fill="#b1b2b3"/><g transform="translate(1110.7,205) scale(0.03135,0.03099) translate(-130,-120)"><path fill="#8e989f" d="M140 825 C125 600 185 385 330 290 C450 225 650 240 800 325 C870 355 950 340 975 285 C990 225 930 180 870 205 L830 180 C900 105 1085 115 1088 270 C1092 420 1000 505 885 600 C845 640 822 720 812 828 L720 828 C705 720 590 720 572 828 L452 828 C432 720 300 720 272 828 Z"/><circle cx="770" cy="420" r="26" fill="#4e5154"/><path d="M285 330 L400 510 L570 420" fill="none" stroke="#4e5154" stroke-width="24"/></g><path d="M1567,209.2 L1581.3,223.5 M1581.3,209.2 L1567,223.5" stroke="#686b6e" stroke-width="1.7"/><circle cx="3138" cy="206.5" r="2.7" fill="#b0b0b0"/><circle cx="3138" cy="216" r="2.7" fill="#b0b0b0"/><circle cx="3138" cy="225.5" r="2.7" fill="#b0b0b0"/><circle cx="1250.1" cy="311.0" r="1.1" fill="#55565b"/><circle cx="1267.4" cy="311.0" r="1.1" fill="#55565b"/><circle cx="1284.7" cy="311.0" r="1.1" fill="#55565b"/><circle cx="1302.0" cy="311.0" r="1.1" fill="#55565b"/><circle cx="1319.3" cy="311.0" r="1.1" fill="#55565b"/><circle cx="1336.6" cy="311.0" r="1.1" fill="#55565b"/><circle cx="1353.9" cy="311.0" r="1.1" fill="#55565b"/><circle cx="1371.2" cy="311.0" r="1.1" fill="#55565b"/><circle cx="1250.1" cy="355.0" r="1.1" fill="#55565b"/><circle cx="1267.4" cy="355.0" r="1.1" fill="#55565b"/><circle cx="1284.7" cy="355.0" r="1.1" fill="#55565b"/><circle cx="1302.0" cy="355.0" r="1.1" fill="#55565b"/><circle cx="1457.8" cy="487.0" r="1.1" fill="#55565b"/><circle cx="1250.1" cy="531.0" r="1.1" fill="#55565b"/><circle cx="1267.4" cy="531.0" r="1.1" fill="#55565b"/><circle cx="1284.7" cy="531.0" r="1.1" fill="#55565b"/><circle cx="1302.0" cy="531.0" r="1.1" fill="#55565b"/><circle cx="1561.6" cy="531.0" r="1.1" fill="#55565b"/><circle cx="1804.0" cy="531.0" r="1.1" fill="#55565b"/><circle cx="1994.4" cy="531.0" r="1.1" fill="#55565b"/><circle cx="2150.2" cy="531.0" r="1.1" fill="#55565b"/><circle cx="1250.1" cy="575.0" r="1.1" fill="#55565b"/><circle cx="1267.4" cy="575.0" r="1.1" fill="#55565b"/><circle cx="1284.7" cy="575.0" r="1.1" fill="#55565b"/><circle cx="1302.0" cy="575.0" r="1.1" fill="#55565b"/><circle cx="1561.6" cy="575.0" r="1.1" fill="#55565b"/><circle cx="1804.0" cy="575.0" r="1.1" fill="#55565b"/><circle cx="1942.5" cy="575.0" r="1.1" fill="#55565b"/><circle cx="2098.2" cy="575.0" r="1.1" fill="#55565b"/><circle cx="1250.1" cy="619.0" r="1.1" fill="#55565b"/><circle cx="1267.4" cy="619.0" r="1.1" fill="#55565b"/><circle cx="1284.7" cy="619.0" r="1.1" fill="#55565b"/><circle cx="1302.0" cy="619.0" r="1.1" fill="#55565b"/><circle cx="1561.6" cy="619.0" r="1.1" fill="#55565b"/><circle cx="1804.0" cy="619.0" r="1.1" fill="#55565b"/><circle cx="2721.4" cy="619.0" r="1.1" fill="#55565b"/><circle cx="2877.2" cy="619.0" r="1.1" fill="#55565b"/><circle cx="1250.1" cy="663.0" r="1.1" fill="#55565b"/><circle cx="1267.4" cy="663.0" r="1.1" fill="#55565b"/><circle cx="1284.7" cy="663.0" r="1.1" fill="#55565b"/><circle cx="1302.0" cy="663.0" r="1.1" fill="#55565b"/><circle cx="1561.6" cy="663.0" r="1.1" fill="#55565b"/><circle cx="1804.0" cy="663.0" r="1.1" fill="#55565b"/><circle cx="2790.6" cy="663.0" r="1.1" fill="#55565b"/><circle cx="2946.4" cy="663.0" r="1.1" fill="#55565b"/><circle cx="1250.1" cy="707.0" r="1.1" fill="#55565b"/><circle cx="1267.4" cy="707.0" r="1.1" fill="#55565b"/><circle cx="1284.7" cy="707.0" r="1.1" fill="#55565b"/><circle cx="1302.0" cy="707.0" r="1.1" fill="#55565b"/><circle cx="1561.6" cy="707.0" r="1.1" fill="#55565b"/><circle cx="1250.1" cy="751.0" r="1.1" fill="#55565b"/><circle cx="1267.4" cy="751.0" r="1.1" fill="#55565b"/><circle cx="1284.7" cy="751.0" r="1.1" fill="#55565b"/><circle cx="1302.0" cy="751.0" r="1.1" fill="#55565b"/><circle cx="1561.6" cy="751.0" r="1.1" fill="#55565b"/><path d="M1230,298.8 L1238.8,306 V320.3 H1221.2 V306 Z" fill="#292a30" stroke="#6a6b6e" stroke-width="1.7"/><path d="M1225.5,311.6 H1234.5" stroke="#6a6b6e" stroke-width="1.7"/><path d="M1230,342.5 L1238.8,349.7 V364.0 H1221.2 V349.7 Z" fill="#292a30" stroke="#6a6b6e" stroke-width="1.7"/><path d="M1225.5,355.3 H1234.5" stroke="#6a6b6e" stroke-width="1.7"/><path d="M1230,386.40000000000003 L1238.8,393.6 V407.90000000000003 H1221.2 V393.6 Z" fill="#292a30" stroke="#6a6b6e" stroke-width="1.7"/><path d="M1225.5,399.20000000000005 H1234.5" stroke="#6a6b6e" stroke-width="1.7"/><path d="M1221.2,479 H1238.8 V493.3 L1230,500.5 L1221.2,493.3 Z" fill="#292a30" stroke="#6a6b6e" stroke-width="1.7"/><path d="M1225.5,486.7 H1234.5" stroke="#6a6b6e" stroke-width="1.7"/><path d="M1230,782.4 L1238.8,789.6 V803.9 H1221.2 V789.6 Z" fill="#292a30" stroke="#6a6b6e" stroke-width="1.7"/><path d="M1225.5,795.2 H1234.5" stroke="#6a6b6e" stroke-width="1.7"/><rect x="1306.5" y="298" width="1.5" height="33" fill="#3e3f44"/><path fill="#e3a923" d="M2981.8,312 L2993.5,337 H2970 Z"/><rect x="2980.5" y="320" width="2.6" height="7" fill="#292a30"/><rect x="2980.5" y="329.5" width="2.6" height="3" fill="#292a30"/><path d="M3028,325 L3035,332 L3048,316" fill="none" stroke="#4ea35a" stroke-width="3.6"/><path d="M3027,337 L3031.5,333 L3036,337 L3040.5,333 L3045,337 L3049,333" fill="none" stroke="#4ea35a" stroke-width="1.4"/><path d="M3088.5,329 L3096.5,321 L3104.5,329" fill="none" stroke="#a9a9a9" stroke-width="2.3"/><path d="M3129.5,320 L3137.5,328 L3145.5,320" fill="none" stroke="#a9a9a9" stroke-width="2.3"/><rect x="3134" y="350" width="28" height="4" fill="#d9a326"/><rect x="3143" y="858" width="12" height="84" rx="6" fill="#4a4b4f"/><path d="M185.9,1018 V1035.7 M196.2,1022 Q196.2,1030 185.9,1031" fill="none" stroke="#afb0b1" stroke-width="3.2"/><circle cx="185.9" cy="1018.1" r="3.2" fill="#afb0b1"/><circle cx="196.2" cy="1022.1" r="3.2" fill="#afb0b1"/><circle cx="185.9" cy="1035.7" r="3.2" fill="#afb0b1"/><path fill="#afb0b1" d="M413.7,1019.6 L429.8,1027.2 L413.7,1036.7 Z"/><rect x="523.8" y="1018.2" width="4" height="3.4" fill="#afb0b1"/><rect x="530" y="1018.2" width="14.2" height="3.4" fill="#afb0b1"/><rect x="523.8" y="1025" width="4" height="3.4" fill="#afb0b1"/><rect x="530" y="1025" width="14.2" height="3.4" fill="#afb0b1"/><rect x="523.8" y="1031" width="4" height="3.4" fill="#afb0b1"/><rect x="530" y="1031" width="14.2" height="3.4" fill="#afb0b1"/><circle cx="669.2" cy="1025.6" r="10.3" fill="#afb0b1"/><rect x="667.4" y="1018.8" width="3.6" height="8.2" fill="#323333"/><rect x="667.4" y="1029" width="3.6" height="2.8" fill="#323333"/><rect x="830" y="1016.1" width="22" height="19.7" fill="#afb0b1"/><path d="M833,1020.5 L838.5,1024.5 L833,1028.5" fill="none" stroke="#323333" stroke-width="1.8"/><rect x="840" y="1030" width="8.5" height="1.8" fill="#323333"/><path fill="#afb0b1" d="M998.3,1024 V1018.5 Q998.3,1016 1001,1016 H1011.5 Q1014.2,1016 1014.2,1018.5 V1024 H1018 V1026.1 H1014.2 V1033 Q1014.2,1035.2 1012,1035.2 L1016.2,1037.5 V1040 H997.9 V1037.5 L1002,1035.2 Q998.3,1035.2 998.3,1033 V1026.1 H995.9 V1024 Z"/><rect x="1224" y="1020" width="22.2" height="4.1" fill="#afb0b1"/><rect x="1224" y="1026.1" width="11.8" height="3.6" fill="#afb0b1"/><rect x="1224" y="1031.7" width="17.8" height="4.3" fill="#afb0b1"/><path fill="#afb0b1" d="M1365.9,1024.6 L1375.5,1015.3 L1381.4,1015.3 L1381.1,1016.2 L1376.5,1020.9 L1383.6,1026.8 L1392,1034.8 L1387.3,1039.2 L1378.9,1030.8 L1379.3,1029.9 L1373.4,1024 L1369.3,1028 Z"/><path d="M1491.7,1035.8 A11.2,11.2 0 0 1 1509.3,1026.6" fill="none" stroke="#afb0b1" stroke-width="4.4"/><path d="M1511,1029.3 A11.2,11.2 0 0 1 1514.1,1035.8" fill="none" stroke="#afb0b1" stroke-width="4.4"/><path fill="#afb0b1" d="M1510.3,1023 L1505.3,1035 A2.8,2.8 0 0 1 1500.6,1032.3 Z"/><path fill="#efa62f" d="M2780,1040 H2767 A13,13 0 1 1 2780,1027 Z"/><text x="2761.5" y="1034" font-family="Liberation Sans" font-weight="700" font-size="18.5" fill="#3b3b3b">4</text><path d="M2935,1027.6 V1015.3 H2953.8" fill="none" stroke="#afb0b1" stroke-width="1.9"/><path d="M2945,1030.9 H2938.8 V1019.6 H2955 V1024" fill="none" stroke="#afb0b1" stroke-width="1.9"/><circle cx="2950.8" cy="1028.9" r="4.4" fill="#323333" stroke="#afb0b1" stroke-width="2"/><path d="M2954,1032.3 L2958.5,1036.8" stroke="#afb0b1" stroke-width="2.6"/><path d="M124.9,1060.6 V1078.7 H143.7" fill="none" stroke="#afb0b1" stroke-width="1.8"/><rect x="129.3" y="1057.2" width="18" height="17.2" fill="none" stroke="#afb0b1" stroke-width="1.8"/><path d="M3107.4,1065.9 V1061.6 A4.5,4.5 0 0 1 3116.4,1061.6 V1066" fill="none" stroke="#afb0b1" stroke-width="3.1"/><rect x="3112" y="1065.9" width="16" height="12.1" fill="#afb0b1"/><path fill="#afb0b1" d="M3159.5,1055.8 H3176.5 Q3180,1055.8 3180,1059.3 V1078 L3173.8,1074 H3159.5 Q3156,1074 3156,1070.5 V1059.3 Q3156,1055.8 3159.5,1055.8 Z"/><rect x="3166" y="1058.2" width="3.9" height="7.7" fill="#323333"/><rect x="3166" y="1068.2" width="3.9" height="3.5" fill="#323333"/><path fill="#bcbcbc" d="M122,290 H131 L133.5,293.5 H144 V307.8 H122 Z"/><path fill="#afb0b1" d="M132.5,560.5 L138.3,569.8 H126.7 Z"/><rect x="122.5" y="571.5" width="10.5" height="10.9" fill="#afb0b1"/><circle cx="139" cy="577" r="5.3" fill="#afb0b1"/><rect x="134" y="735.8" width="8" height="7.7" fill="#afb0b1"/><rect x="123.8" y="746.2" width="7.7" height="7.8" fill="#afb0b1"/><rect x="134" y="746.2" width="8" height="7.8" fill="#afb0b1"/><path fill="#afb0b1" d="M124,921.9 H142 V944 L133,936 L124,944 Z"/><g transform="translate(3170,210.6) scale(0.02646,0.02648) translate(-130,-120)"><path fill="#b3b4b5" d="M140 825 C125 600 185 385 330 290 C450 225 650 240 800 325 C870 355 950 340 975 285 C990 225 930 180 870 205 L830 180 C900 105 1085 115 1088 270 C1092 420 1000 505 885 600 C845 640 822 720 812 828 L720 828 C705 720 590 720 572 828 L452 828 C432 720 300 720 272 828 Z"/><circle cx="770" cy="420" r="26" fill="#313232"/><path d="M285 330 L400 510 L570 420" fill="none" stroke="#313232" stroke-width="24"/></g><path d="M3187.5,363 V355.5 Q3187.5,355 3187,355 H3174.5 Q3173.2,355 3173.2,356.5 V375.8 Q3173.2,377 3174.5,377 H3177.5" fill="none" stroke="#afb0b1" stroke-width="2.2"/><rect x="3180.9" y="362.9" width="12.1" height="15.9" rx="2" fill="#313232" stroke="#afb0b1" stroke-width="2.1"/><rect x="3181" y="373.3" width="12" height="5.5" fill="#afb0b1"/><rect x="3186.2" y="375" width="1.8" height="1.8" fill="#222"/><path d="M3187,608 V597.6 Q3187,597 3186,597 H3175.8 Q3175.2,597 3175.2,598 V616.6 H3179.5" fill="none" stroke="#afb0b1" stroke-width="2.1"/><rect x="3182.9" y="611" width="10.1" height="5.9" fill="none" stroke="#afb0b1" stroke-width="2"/><rect x="3181.9" y="620" width="12.1" height="2.1" fill="#afb0b1"/><rect x="3175.2" y="769" width="18" height="23.4" rx="2" fill="none" stroke="#afb0b1" stroke-width="2.1"/><rect x="3175.2" y="786" width="18" height="6.4" fill="#afb0b1"/><rect x="3181.5" y="788.5" width="5.4" height="1.6" fill="#313232"/></svg></div>
</div>
<div style="position:absolute;left:112px;top:76px;width:3087.5px;height:1007px;border:2px solid #616363;border-radius:21px"></div>
</body></html>
